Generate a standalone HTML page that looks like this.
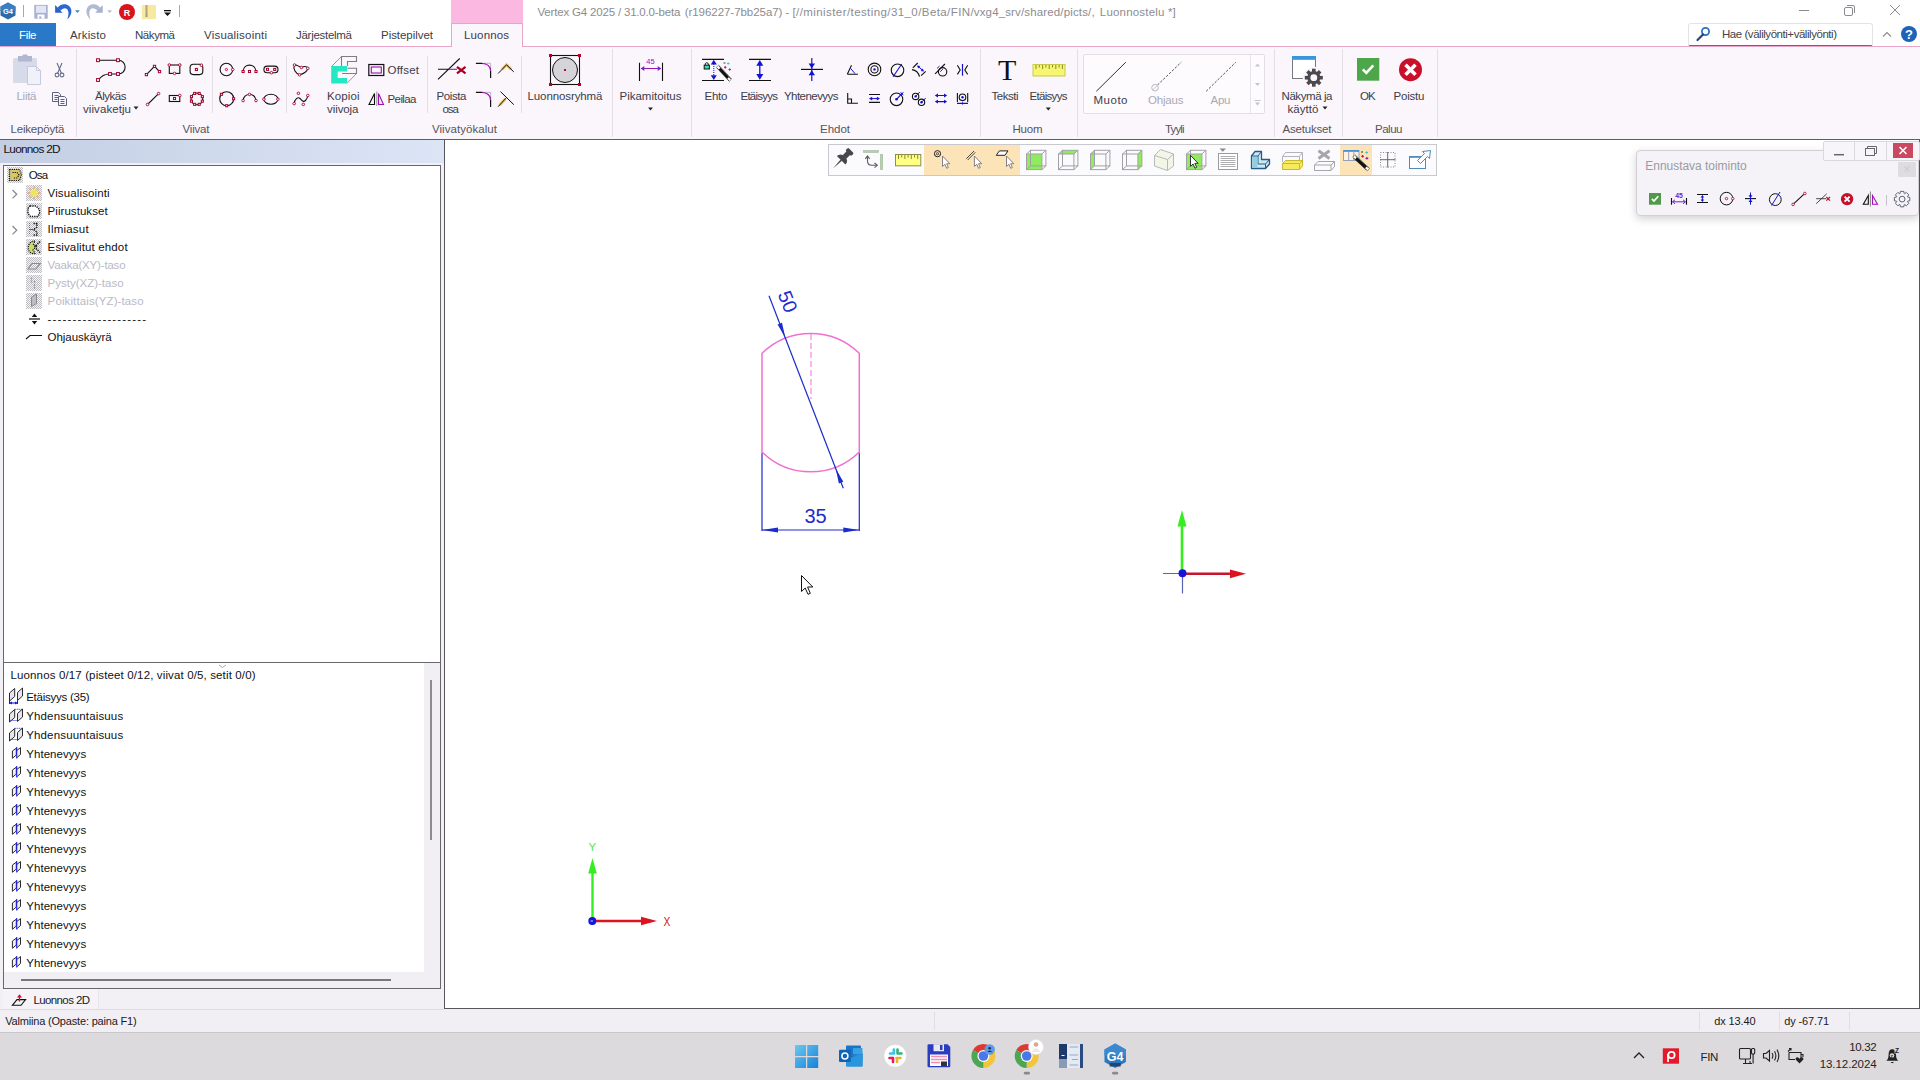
<!DOCTYPE html>
<html lang="fi">
<head>
<meta charset="utf-8">
<title>Vertex G4 2025</title>
<style>
*{box-sizing:border-box;margin:0;padding:0}
html,body{width:1920px;height:1080px;overflow:hidden;background:#fff}
body{position:relative;font-family:"Liberation Sans",sans-serif;font-size:12px;color:#222}
.abs{position:absolute}
svg{position:absolute;overflow:visible}
#title{left:0;top:0;width:1920px;height:23px;background:#fff}
#tabs{left:0;top:23px;width:1920px;height:24px;background:#fff}
#ribbon{left:0;top:47px;width:1920px;height:92px;background:#faf6fb}
#rline{left:0;top:139px;width:1920px;height:1px;background:#5e5e62}
#left{left:0;top:140px;width:444px;height:870px;background:#f2f0f4}
#canvas{left:444px;top:140px;width:1476px;height:869px;background:#fff;border-left:1px solid #55555a;border-bottom:1px solid #55555a;border-right:1px solid #55555a}
#status{left:0;top:1009px;width:1920px;height:23px;background:#f1eff3}
#taskbar{left:0;top:1032px;width:1920px;height:48px;background:#dcdadd;border-top:1px solid #c9c7ca}
.t{position:absolute;white-space:nowrap;line-height:14px}
.vs{position:absolute;width:1px;background:#e3dfe6}
</style>
</head>
<body>
<div id="title" class="abs">
<div class="abs" style="left:451px;top:0;width:72px;height:24px;background:#fbb8e0"></div>
<svg width="180" height="23" style="left:0;top:0" viewBox="0 0 180 23">
<polygon points="8,2.500 15.500,6.500 15.500,15.500 8,19.500 0.500,15.500 0.500,6.500" fill="#2d6aa8"/>
<polygon points="8,2.500 15.500,6.500 15.500,11 0.500,11 0.500,6.500" fill="#3c7fc0"/>
<text x="8" y="14.200" font-size="7.500" font-weight="bold" fill="#fff" text-anchor="middle" font-family="Liberation Sans, sans-serif">G4</text>
<rect x="23" y="5" width="1" height="12" fill="#a8a8ac"/>
<rect x="34.300" y="4.900" width="13.400" height="13.800" fill="#aab0d0"/><rect x="36" y="5.800" width="10" height="7" fill="#e3e6f5"/><rect x="37.500" y="14.500" width="7" height="4.200" fill="#fff"/><rect x="39.300" y="16.300" width="2" height="2.400" fill="#aab0d0"/>
<polygon points="55.100,4.900 55.100,12.800 62.600,12.800" fill="#2a5fcc"/><path d="M57.500 8 C60 3.300 69 2.300 71.200 9.500 C72 13.500 70 17 67.300 19.500 C68.500 15.500 69.200 12 67.200 9.300 C65.500 7.300 62.500 8 60.500 10.800 Z" fill="#2a67d4"/>
<polygon points="75,10.200 79.800,10.200 77.400,13" fill="#4f7fb4"/>
<polygon points="102.700,4.900 102.700,12.800 95.200,12.800" fill="#a9b0cd"/><path d="M100.300 8 C97.800 3.300 88.800 2.300 86.600 9.500 C85.800 13.500 87.800 17 90.500 19.500 C89.300 15.500 88.600 12 90.600 9.300 C92.300 7.300 95.300 8 97.300 10.800 Z" fill="#b2b9d2"/>
<polygon points="107.200,10.200 112,10.200 109.600,13" fill="#bcbcc4"/>
<circle cx="127" cy="12" r="8" fill="#d9141e"/>
<text x="127" y="15.500" font-size="9" font-weight="bold" fill="#fff" text-anchor="middle" font-family="Liberation Sans, sans-serif">R</text>
<rect x="142" y="5" width="14" height="14" fill="#f7e9a0"/><rect x="145.500" y="5" width="2" height="9" fill="#b6a37a"/><rect x="145.500" y="14" width="2" height="3" fill="#9a9a9a"/>
<rect x="164" y="10" width="7" height="1.300" fill="#111"/><polygon points="164,12.500 171,12.500 167.500,16" fill="#111"/>
<rect x="179" y="5" width="1" height="12" fill="#a8a8ac"/>
</svg>
<div class="t" style="left:537.5px;top:5.02px;color:#8c8c90;font-size:11.5px;letter-spacing:-0.181px;">Vertex G4 2025 / 31.0.0-beta</div>
<div class="t" style="left:684.7px;top:5.02px;color:#8c8c90;font-size:11.5px;letter-spacing:-0.044px;">(r196227-7bb25a7) -</div>
<div class="t" style="left:792.5px;top:5.02px;color:#8c8c90;font-size:11.5px;letter-spacing:0.416px;">[//minister/testing/31_0/Beta/FIN/</div>
<div class="t" style="left:973.8px;top:5.02px;color:#8c8c90;font-size:11.5px;letter-spacing:0.145px;">vxg4_srv/shared/picts/,</div>
<div class="t" style="left:1099.8px;top:5.02px;color:#8c8c90;font-size:11.5px;letter-spacing:0.189px;">Luonnostelu *]</div>
<svg width="120" height="23" style="left:1790px;top:0" viewBox="0 0 120 23" fill="none" stroke="#8a8a90" stroke-width="1">
<path d="M9 10.500 H19"/>
<rect x="54.500" y="7.500" width="8" height="8" rx="1.500"/><path d="M57 5.500 H63 Q64.500 5.500 64.500 7 V13"/>
<path d="M100 5 L110 15 M110 5 L100 15"/>
</svg>
</div>
<div id="tabs" class="abs">
<div class="abs" style="left:0;top:0;width:56px;height:23px;background:#2a79c9"></div>
<div class="abs" style="left:0;top:23px;width:1920px;height:1px;background:#eaa4c8"></div>
<div class="abs" style="left:451px;top:0;width:72px;height:24px;background:#faf6fb;border:1px solid #eaa4c8;border-bottom:none"></div>
<div class="abs" style="left:1688px;top:0;width:185px;height:23px;background:#fff;border:1px solid #e4e2e6;border-bottom:1px solid #6c6a70;border-radius:3px 3px 2px 2px"></div>
<svg width="20" height="20" style="left:1694px;top:1px" viewBox="0 0 20 20"><circle cx="11.500" cy="7.500" r="3.600" fill="#fff" stroke="#2f6fc0" stroke-width="1.800"/><path d="M9 10.500 L3.500 16" stroke="#2b3f78" stroke-width="2.200" stroke-linecap="round"/></svg>
<svg width="40" height="24" style="left:1880px;top:0" viewBox="0 0 40 24"><path d="M3 13.500 L7 9.500 L11 13.500" fill="none" stroke="#8a8a90" stroke-width="1.100"/><circle cx="29" cy="11" r="8" fill="#1d63b8"/><text x="29" y="15.500" font-size="13" font-weight="bold" fill="#fff" text-anchor="middle" font-family="Liberation Sans, sans-serif">?</text></svg>
</div>
<div class="t" style="left:19px;top:28.02px;color:#fff;font-size:11.5px;letter-spacing:-0.344px;">File</div>
<div class="t" style="left:70px;top:28.02px;color:#3c3c4a;font-size:11.5px;letter-spacing:0.141px;">Arkisto</div>
<div class="t" style="left:135px;top:28.02px;color:#3c3c4a;font-size:11.5px;letter-spacing:-0.438px;">Näkymä</div>
<div class="t" style="left:204px;top:28.02px;color:#3c3c4a;font-size:11.5px;letter-spacing:0.207px;">Visualisointi</div>
<div class="t" style="left:296px;top:28.02px;color:#3c3c4a;font-size:11.5px;letter-spacing:-0.281px;">Järjestelmä</div>
<div class="t" style="left:381px;top:28.02px;color:#3c3c4a;font-size:11.5px;letter-spacing:-0.042px;">Pistepilvet</div>
<div class="t" style="left:464px;top:28.02px;color:#3c3c4a;font-size:11.5px;letter-spacing:0.146px;">Luonnos</div>
<div class="t" style="left:1722px;top:26.52px;color:#444;font-size:11.5px;letter-spacing:-0.457px;">Hae (välilyönti+välilyönti)</div><div id="ribbon" class="abs"></div><div id="rline" class="abs"></div>
<div class="vs" style="left:76px;top:49px;height:88px"></div>
<div class="vs" style="left:612px;top:49px;height:88px"></div>
<div class="vs" style="left:691px;top:49px;height:88px"></div>
<div class="vs" style="left:980px;top:49px;height:88px"></div>
<div class="vs" style="left:1077px;top:49px;height:88px"></div>
<div class="vs" style="left:1274px;top:49px;height:88px"></div>
<div class="vs" style="left:1342px;top:49px;height:88px"></div>
<div class="vs" style="left:1437px;top:49px;height:88px"></div>
<div class="vs" style="left:212px;top:56px;height:57px"></div>
<div class="vs" style="left:286px;top:56px;height:57px"></div>
<div class="vs" style="left:427px;top:56px;height:57px"></div>
<div class="vs" style="left:521px;top:56px;height:57px"></div>
<div class="abs" style="left:1083px;top:54px;width:182px;height:60px;background:#fdfbfd;border:1px solid #e2dfe5;border-radius:2px"></div>
<div class="abs" style="left:1250px;top:55px;width:1px;height:58px;background:#e6e3e9"></div>
<div class="t" style="left:10.5px;top:122.02px;color:#55555f;font-size:11.5px;letter-spacing:-0.181px;">Leikepöytä</div>
<div class="t" style="left:182.5px;top:122.02px;color:#55555f;font-size:11.5px;letter-spacing:-0.184px;">Viivat</div>
<div class="t" style="left:432px;top:122.02px;color:#55555f;font-size:11.5px;letter-spacing:0.053px;">Viivatyökalut</div>
<div class="t" style="left:820px;top:122.02px;color:#55555f;font-size:11.5px;letter-spacing:-0.016px;">Ehdot</div>
<div class="t" style="left:1012.5px;top:122.02px;color:#55555f;font-size:11.5px;letter-spacing:-0.229px;">Huom</div>
<div class="t" style="left:1165px;top:122.02px;color:#55555f;font-size:11.5px;letter-spacing:-0.875px;">Tyyli</div>
<div class="t" style="left:1282.5px;top:122.02px;color:#55555f;font-size:11.5px;letter-spacing:-0.188px;">Asetukset</div>
<div class="t" style="left:1375px;top:122.02px;color:#55555f;font-size:11.5px;letter-spacing:-0.480px;">Paluu</div>
<div class="t" style="left:16.5px;top:89.02px;color:#a9a9b6;font-size:11.5px;letter-spacing:-0.277px;">Liitä</div>
<div class="t" style="left:95px;top:89.02px;color:#3c3c4a;font-size:11.5px;letter-spacing:-0.475px;">Älykäs</div>
<div class="t" style="left:83px;top:102.02px;color:#3c3c4a;font-size:11.5px;letter-spacing:0.076px;">viivaketju</div>
<div class="t" style="left:327px;top:89.02px;color:#3c3c4a;font-size:11.5px;letter-spacing:0.106px;">Kopioi</div>
<div class="t" style="left:327px;top:102.02px;color:#3c3c4a;font-size:11.5px;letter-spacing:-0.078px;">viivoja</div>
<div class="t" style="left:387.5px;top:62.52px;color:#3c3c4a;font-size:11.5px;letter-spacing:0.206px;">Offset</div>
<div class="t" style="left:387.5px;top:91.52px;color:#3c3c4a;font-size:11.5px;letter-spacing:-0.594px;">Peilaa</div>
<div class="t" style="left:436.5px;top:89.02px;color:#3c3c4a;font-size:11.5px;letter-spacing:-0.394px;">Poista</div>
<div class="t" style="left:442.5px;top:102.02px;color:#3c3c4a;font-size:11.5px;letter-spacing:-1.023px;">osa</div>
<div class="t" style="left:527.5px;top:89.02px;color:#3c3c4a;font-size:11.5px;letter-spacing:-0.098px;">Luonnosryhmä</div>
<div class="t" style="left:619.5px;top:89.02px;color:#3c3c4a;font-size:11.5px;letter-spacing:0.000px;">Pikamitoitus</div>
<div class="t" style="left:704.5px;top:89.02px;color:#3c3c4a;font-size:11.5px;letter-spacing:-0.224px;">Ehto</div>
<div class="t" style="left:740.5px;top:89.02px;color:#3c3c4a;font-size:11.5px;letter-spacing:-0.761px;">Etäisyys</div>
<div class="t" style="left:784px;top:89.02px;color:#3c3c4a;font-size:11.5px;letter-spacing:-0.550px;">Yhtenevyys</div>
<div class="t" style="left:991.5px;top:89.02px;color:#3c3c4a;font-size:11.5px;letter-spacing:-0.481px;">Teksti</div>
<div class="t" style="left:1029.5px;top:89.02px;color:#3c3c4a;font-size:11.5px;letter-spacing:-0.690px;">Etäisyys</div>
<div class="t" style="left:1093.5px;top:93.02px;color:#3c3c4a;font-size:11.5px;letter-spacing:0.508px;">Muoto</div>
<div class="t" style="left:1148px;top:93.02px;color:#a9a9b6;font-size:11.5px;letter-spacing:-0.188px;">Ohjaus</div>
<div class="t" style="left:1210.5px;top:93.02px;color:#a9a9b6;font-size:11.5px;letter-spacing:-0.234px;">Apu</div>
<div class="t" style="left:1281.5px;top:89.02px;color:#3c3c4a;font-size:11.5px;letter-spacing:-0.416px;">Näkymä ja</div>
<div class="t" style="left:1287.5px;top:102.02px;color:#3c3c4a;font-size:11.5px;letter-spacing:0.062px;">käyttö</div>
<div class="t" style="left:1360px;top:89.02px;color:#3c3c4a;font-size:11.5px;letter-spacing:-0.825px;">OK</div>
<div class="t" style="left:1393.5px;top:89.02px;color:#3c3c4a;font-size:11.5px;letter-spacing:-0.194px;">Poistu</div>
<div class="t" style="left:998px;top:62.91px;color:#111;font-size:30px;font-family:'Liberation Serif',serif;">T</div>
<svg width="1920" height="140" style="left:0;top:0" viewBox="0 0 1920 140" fill="none" stroke-linecap="butt">
<rect x="13" y="58" width="24" height="25" rx="1.500" fill="#d7dbe9"/><rect x="18" y="56" width="14" height="5.500" fill="#b0b7d1"/><rect x="22.500" y="54.500" width="5" height="3" rx="1" fill="#b0b7d1"/><path d="M27.500 66.500 H36.500 L40.500 70.500 V84.500 H27.500 Z" fill="#f1f2f9" stroke="#c6cadf"/><path d="M36.500 66.500 V70.500 H40.500" stroke="#c6cadf"/>
<g stroke="#666c8c" stroke-width="1.100"><path d="M57 63 L61.500 73.500 M62 63 L57.500 73.500"/><circle cx="57" cy="75" r="1.900"/><circle cx="62" cy="75" r="1.900"/></g>
<g stroke="#5a607f" stroke-width="1"><path d="M52.500 92.500 H58.500 L60.500 94.500 V101.500 H52.500 Z" fill="#faf6fb"/><path d="M54.500 95.500 H58.500 M54.500 97.500 H58.500 M54.500 99.500 H57.500"/><path d="M58.500 96.500 H64.500 L66.500 98.500 V105.500 H58.500 Z" fill="#faf6fb"/><path d="M60.500 99.500 H64.500 M60.500 101.500 H64.500 M60.500 103.500 H64.500"/></g>
<path d="M98 60.200 H118 C127.500 60.200 127.500 74 118 74 H110 C104 74 102 76 98 80" stroke="#111" stroke-width="1.100"/>
<rect x="96.56" y="58.76" width="2.88" height="2.88" fill="#fff" stroke="#a8002a" stroke-width="1"/>
<rect x="116.56" y="58.76" width="2.88" height="2.88" fill="#fff" stroke="#a8002a" stroke-width="1"/>
<rect x="108.56" y="72.56" width="2.88" height="2.88" fill="#fff" stroke="#a8002a" stroke-width="1"/>
<rect x="116.56" y="72.56" width="2.88" height="2.88" fill="#fff" stroke="#a8002a" stroke-width="1"/>
<rect x="96.56" y="78.56" width="2.88" height="2.88" fill="#fff" stroke="#a8002a" stroke-width="1"/>
<polygon points="133.500,106.500 138.500,106.500 136,109.500" fill="#222"/>
<path d="M146.400 74.600 L154.500 66.400 L159.500 71.600" stroke="#111" stroke-width="1.100"/><rect x="145.28" y="73.48" width="2.24" height="2.24" fill="#fff" stroke="#a8002a" stroke-width="1"/><rect x="153.38" y="65.28" width="2.24" height="2.24" fill="#fff" stroke="#a8002a" stroke-width="1"/><rect x="158.38" y="70.48" width="2.24" height="2.24" fill="#fff" stroke="#a8002a" stroke-width="1"/>
<rect x="169.300" y="65" width="10.500" height="8.400" stroke="#111" stroke-width="1.100"/><circle cx="169.30" cy="65.00" r="1.29" fill="#fff" stroke="#a8002a" stroke-width="0.900"/><circle cx="179.80" cy="65.00" r="1.29" fill="#fff" stroke="#a8002a" stroke-width="0.900"/><circle cx="174.50" cy="73.40" r="1.29" fill="#fff" stroke="#a8002a" stroke-width="0.900"/>
<rect x="190.100" y="64.200" width="12.700" height="10.400" rx="3.300" stroke="#111" stroke-width="1.100"/><rect x="195.36" y="68.46" width="2.08" height="2.08" fill="#fff" stroke="#a8002a" stroke-width="1"/><circle cx="201.40" cy="65.20" r="1.29" fill="#fff" stroke="#a8002a" stroke-width="0.900"/>
<circle cx="226.400" cy="69.500" r="6.300" stroke="#111" stroke-width="1.100"/><circle cx="226.40" cy="69.50" r="1.1" fill="#fff" stroke="#a8002a" stroke-width="0.900"/><circle cx="232.70" cy="69.50" r="1.29" fill="#fff" stroke="#a8002a" stroke-width="0.900"/>
<path d="M243.100 71.500 C243.500 63 255.500 63 256 71.500" stroke="#111" stroke-width="1.100"/><rect x="242.06" y="70.46" width="2.08" height="2.08" fill="#fff" stroke="#a8002a" stroke-width="1"/><rect x="248.46" y="70.46" width="2.08" height="2.08" fill="#fff" stroke="#a8002a" stroke-width="1"/><rect x="254.96" y="70.46" width="2.08" height="2.08" fill="#fff" stroke="#a8002a" stroke-width="1"/>
<rect x="263.900" y="66.100" width="14.100" height="6.600" rx="3.300" stroke="#111" stroke-width="1.100"/><rect x="266.46" y="68.36" width="2.08" height="2.08" fill="#fff" stroke="#a8002a" stroke-width="1"/><rect x="273.66" y="68.36" width="2.08" height="2.08" fill="#fff" stroke="#a8002a" stroke-width="1"/><circle cx="271.40" cy="72.70" r="1.29" fill="#fff" stroke="#a8002a" stroke-width="0.900"/>
<path d="M294.500 65 C296.500 64.300 299.500 67 301.400 67.500 C303.500 66.500 306.500 65.800 307.800 68.300 C307.500 71.500 303 74 299.600 74.800 C296 73.500 292.500 69 294.500 65 Z" stroke="#111" stroke-width="1.100"/><circle cx="294.50" cy="65.00" r="1.29" fill="#fff" stroke="#a8002a" stroke-width="0.900"/><circle cx="301.40" cy="67.50" r="1.29" fill="#fff" stroke="#a8002a" stroke-width="0.900"/><circle cx="307.80" cy="68.30" r="1.29" fill="#fff" stroke="#a8002a" stroke-width="0.900"/><circle cx="299.60" cy="74.80" r="1.29" fill="#fff" stroke="#a8002a" stroke-width="0.900"/>
<path d="M147.500 104.500 L158.600 93.600" stroke="#111" stroke-width="1.100"/><circle cx="147.50" cy="104.50" r="1.29" fill="#fff" stroke="#a8002a" stroke-width="0.900"/><circle cx="158.60" cy="93.60" r="1.29" fill="#fff" stroke="#a8002a" stroke-width="0.900"/>
<rect x="169.300" y="95.500" width="10.500" height="6" stroke="#111" stroke-width="1.100"/><rect x="173.46" y="97.46" width="2.08" height="2.08" fill="#fff" stroke="#a8002a" stroke-width="1"/><circle cx="179.80" cy="95.50" r="1.29" fill="#fff" stroke="#a8002a" stroke-width="0.900"/>
<circle cx="196.900" cy="98.900" r="5.900" stroke="#111" stroke-width="1.100"/>
<rect x="201.31" y="100.12" width="2.08" height="2.08" fill="#fff" stroke="#a8002a" stroke-width="1"/>
<rect x="198.12" y="103.31" width="2.08" height="2.08" fill="#fff" stroke="#a8002a" stroke-width="1"/>
<rect x="193.60" y="103.31" width="2.08" height="2.08" fill="#fff" stroke="#a8002a" stroke-width="1"/>
<rect x="190.41" y="100.12" width="2.08" height="2.08" fill="#fff" stroke="#a8002a" stroke-width="1"/>
<rect x="190.41" y="95.60" width="2.08" height="2.08" fill="#fff" stroke="#a8002a" stroke-width="1"/>
<rect x="193.60" y="92.41" width="2.08" height="2.08" fill="#fff" stroke="#a8002a" stroke-width="1"/>
<rect x="198.12" y="92.41" width="2.08" height="2.08" fill="#fff" stroke="#a8002a" stroke-width="1"/>
<rect x="201.31" y="95.60" width="2.08" height="2.08" fill="#fff" stroke="#a8002a" stroke-width="1"/>
<circle cx="226.700" cy="98.700" r="7" stroke="#111" stroke-width="1.100"/><rect x="220.36" y="93.26" width="2.08" height="2.08" fill="#fff" stroke="#a8002a" stroke-width="1"/><rect x="232.56" y="97.66" width="2.08" height="2.08" fill="#fff" stroke="#a8002a" stroke-width="1"/><rect x="225.66" y="104.66" width="2.08" height="2.08" fill="#fff" stroke="#a8002a" stroke-width="1"/>
<path d="M243.100 100.600 C244 92.500 255 92.500 256 100.600" stroke="#111" stroke-width="1.100"/><circle cx="243.10" cy="100.60" r="1.29" fill="#fff" stroke="#a8002a" stroke-width="0.900"/><circle cx="249.50" cy="94.40" r="1.29" fill="#fff" stroke="#a8002a" stroke-width="0.900"/><circle cx="256.00" cy="100.60" r="1.29" fill="#fff" stroke="#a8002a" stroke-width="0.900"/>
<ellipse cx="270.900" cy="99.200" rx="7" ry="5" stroke="#111" stroke-width="1.100"/><circle cx="263.90" cy="99.20" r="1.29" fill="#fff" stroke="#a8002a" stroke-width="0.900"/><circle cx="277.90" cy="99.20" r="1.29" fill="#fff" stroke="#a8002a" stroke-width="0.900"/>
<path d="M294.200 103.600 C294.500 99 298 96.500 300 98.500 C302 100.500 303.500 102.500 305.500 100.500 C307 99 307.600 97.500 307.800 95.500" stroke="#111" stroke-width="1.100"/><circle cx="298.40" cy="93.30" r="1.29" fill="#fff" stroke="#a8002a" stroke-width="0.900"/><circle cx="307.80" cy="95.50" r="1.29" fill="#fff" stroke="#a8002a" stroke-width="0.900"/><circle cx="294.20" cy="103.60" r="1.29" fill="#fff" stroke="#a8002a" stroke-width="0.900"/><circle cx="303.30" cy="104.40" r="1.29" fill="#fff" stroke="#a8002a" stroke-width="0.900"/>
<g stroke="#7d7d86" stroke-width="1.100"><path d="M341.500 66 V56.500 H356.500 V61.500 H347.500 V66"/><path d="M347.500 68.300 H356.500 V73.500 H342"/><path d="M341.500 56.500 L331.500 66.500 M356.500 73.500 L347 83.300" stroke-width="0.800"/></g>
<path d="M331.200 66.100 H347.100 V71.500 H337.700 V78.100 H347.100 V83.500 H331.200 Z" fill="#24e8c4"/>
<path d="M337.700 76 L341.500 72 L342.500 73 L338.500 77.200 Z" fill="#f4f4f8"/>
<rect x="368.800" y="64.500" width="15" height="11" stroke="#111" stroke-width="1.200"/><rect x="371.300" y="67" width="10" height="6" stroke="#a010b0" stroke-width="1.100"/>
<path d="M374.500 93.500 V104.500 H369 Z" stroke="#111" stroke-width="1.100"/><path d="M376.800 91.500 V106" stroke="#777" stroke-width="0.800"/><path d="M378.500 93.500 V104.500 H383.500 Z" stroke="#a010b0" stroke-width="1.100"/>
<path d="M438 79.300 L459.700 58.500 M438 69.300 H449" stroke="#111" stroke-width="1.100"/><path d="M449 69.300 H457" stroke="#a010b0" stroke-width="1.100"/><path d="M457 66.800 L465.500 73.300 M465.500 66.800 L457 73.300" stroke="#a80020" stroke-width="2.200"/>
<path d="M484 63.3 H490.600 V69.5" stroke="#b8b8c0" stroke-width="1"/><path d="M475.900 63.3 H482 M490.600 70.8 V77.9" stroke="#111" stroke-width="1.200"/><path d="M482 63.3 C487 63.5 490.400 66.5 490.600 70.8" stroke="#a010b0" stroke-width="1.300"/>
<path d="M484 92.4 H490.600 V98.6" stroke="#b8b8c0" stroke-width="1"/><path d="M475.900 92.4 H482 M490.600 99.9 V107.0" stroke="#111" stroke-width="1.200"/><path d="M482 92.4 C487 92.6 490.400 95.6 490.600 99.9" stroke="#a010b0" stroke-width="1.300"/>
<path d="M502 69.400 L506.500 64.800 L511.300 69.400" stroke="#f2c469" stroke-width="3"/><path d="M498.100 73.500 L506.500 64.800 L513.800 71.900" stroke="#111" stroke-width="1"/>
<path d="M499.500 105.300 L505.500 98.700" stroke="#f2c469" stroke-width="3"/><path d="M500.500 91.600 L513.800 104.700 M498.100 106.700 L506 98.100" stroke="#111" stroke-width="1"/>
<rect x="550.500" y="55.500" width="29" height="29" stroke="#111" stroke-width="1.100"/><circle cx="565" cy="70" r="12.500" fill="#d4d4d9" stroke="#111" stroke-width="1"/><rect x="564" y="69" width="2" height="2" fill="#c00828"/>
<rect x="549.0" y="54.0" width="3" height="3" fill="#b4002c"/>
<rect x="578.0" y="54.0" width="3" height="3" fill="#b4002c"/>
<rect x="549.0" y="83.0" width="3" height="3" fill="#b4002c"/>
<rect x="578.0" y="83.0" width="3" height="3" fill="#b4002c"/>
<path d="M639.500 62.700 V81 M662.500 62.700 V81" stroke="#111" stroke-width="1.100"/><path d="M641 68.500 H661" stroke="#a010b0" stroke-width="1"/><polygon points="640.800,68.500 644.300,66 644.300,71" fill="#6a2ad0"/><polygon points="661.200,68.500 657.700,66 657.700,71" fill="#6a2ad0"/>
<text x="650.500" y="64.200" font-size="7.500" fill="#a010c0" text-anchor="middle" font-family="Liberation Sans, sans-serif">45</text>
<polygon points="648,107.500 653,107.500 650.500,110.500" fill="#222"/>
<path d="M702 59.300 H724 M702 80.500 H724" stroke="#111" stroke-width="1.200"/><path d="M713.800 62 V78" stroke="#1212d2" stroke-width="1" stroke-dasharray="1 1"/><polygon points="713.800,59.800 710.800,64.500 716.800,64.500" fill="#1212d2"/><polygon points="713.800,80 710.800,75.300 716.800,75.300" fill="#1212d2"/>
<rect x="704.200" y="65.200" width="5.200" height="3.800" fill="#35e0b6" stroke="#111" stroke-width="1"/><path d="M705.300 65 V63.600 Q706.800 61.600 708.300 63.600 V65" stroke="#111" stroke-width="1"/>
<path d="M718 67 L730 80" stroke="#111" stroke-width="3.200"/><path d="M717.500 66.500 L719.500 68.700 M728 78 L730.500 80.500" stroke="#fff" stroke-width="2.200"/><path d="M716.300 67.300 L718.700 65 L731.700 79 L729.300 81.300 Z" stroke="#333" stroke-width="0.500"/>
<path d="M723.500 62 L725.500 64 M725.500 62 L723.500 64" stroke="#666" stroke-width="0.700"/><path d="M727 63.500 H729.500 M728.200 62.300 V64.700" stroke="#20c8d8" stroke-width="0.900"/><path d="M724 67.300 H726.500 M725.200 66 V68.600" stroke="#c01030" stroke-width="0.900"/><path d="M728.500 69.500 H731 M729.700 68.300 V70.700" stroke="#a010b0" stroke-width="0.900"/>
<path d="M749 59.300 H771 M749 80.500 H771" stroke="#111" stroke-width="1.200"/><path d="M759.800 63 V77" stroke="#1212d2" stroke-width="1.300"/><polygon points="759.800,60 756.300,65.800 763.300,65.800" fill="#1212d2"/><polygon points="759.800,79.800 756.300,74 763.300,74" fill="#1212d2"/>
<path d="M801 69.400 H823" stroke="#111" stroke-width="1.200"/><path d="M811.800 58 V81" stroke="#1212d2" stroke-width="1.200"/><polygon points="811.800,68.600 808.600,63.600 815,63.600" fill="#1212d2"/><polygon points="811.800,70.200 808.600,75.200 815,75.200" fill="#1212d2"/>
<path d="M847.300 74.200 H857.900 M847.300 74.200 L851.500 65.300" stroke="#111" stroke-width="1.100"/><path d="M850.600 68.400 L855 73.600" stroke="#1212d2" stroke-width="1"/>
<circle cx="874.500" cy="69.400" r="6.300" stroke="#111" stroke-width="1.100"/><circle cx="874.500" cy="69.400" r="3.600" stroke="#111" stroke-width="1.100"/><circle cx="874.500" cy="69.400" r="1.200" fill="#1212d2"/>
<circle cx="897.500" cy="70.300" r="6.300" stroke="#111" stroke-width="1.100"/><path d="M893.100 76.700 L901.700 64" stroke="#1212d2" stroke-width="1.100"/>
<path d="M912.800 67.900 L917.700 63 M912 69.600 Q918 70.500 919.500 76.700 M921.100 75.700 L925.700 71.300" stroke="#111" stroke-width="1.100"/><path d="M918 66.300 L923 70.600" stroke="#1212d2" stroke-width="1"/><polygon points="917,65.400 920.300,66 918.200,68.400" fill="#1212d2"/><polygon points="924,71.500 920.700,70.900 922.800,68.500" fill="#1212d2"/>
<circle cx="942.600" cy="71.800" r="4.200" stroke="#111" stroke-width="1.100"/><path d="M935.100 73.900 L944.900 64" stroke="#111" stroke-width="1.100"/><path d="M937.100 68.400 L939.500 66.100 M940.300 71.600 L942.800 69.200" stroke="#1212d2" stroke-width="1"/>
<path d="M957.400 65.300 L960.200 70 L957.400 74.400 M967.700 65.300 L964.800 70 L967.700 74.400" stroke="#111" stroke-width="1.100"/><path d="M962.500 64 V75.700" stroke="#1212d2" stroke-width="1.200"/>
<path d="M847.700 93.100 V103.300 H857.900 M847.700 99 H851.500 V103.300" stroke="#111" stroke-width="1.100"/>
<path d="M869 94.500 H880 M869 102.400 H880" stroke="#111" stroke-width="1.100"/><path d="M870.500 98.600 H878.500" stroke="#1212d2" stroke-width="1"/><polygon points="869,98.600 872.200,96.800 872.200,100.400" fill="#1212d2"/><polygon points="880,98.600 876.800,96.800 876.800,100.400" fill="#1212d2"/>
<circle cx="896.500" cy="99.300" r="6.300" stroke="#111" stroke-width="1.100"/><path d="M896.500 99.300 L902.500 93" stroke="#1212d2" stroke-width="1.100"/><circle cx="896.500" cy="99.300" r="1.300" fill="#1212d2"/><path d="M900.700 92.300 L901.800 93.800 L903.300 95 M901 94.600 L903.300 92.300" stroke="#1212d2" stroke-width="1"/>
<circle cx="915.600" cy="96.400" r="3.200" stroke="#111" stroke-width="1.100"/><circle cx="921.500" cy="102.300" r="3.200" stroke="#111" stroke-width="1.100"/><circle cx="915.600" cy="96.400" r="1.200" fill="#1212d2"/><circle cx="921.500" cy="102.300" r="1.200" fill="#1212d2"/><path d="M915.600 96.400 L919.800 92 M921.500 102.300 L925.700 98" stroke="#1212d2" stroke-width="1"/>
<path d="M936 95.500 H946 M936 101.600 H946" stroke="#1212d2" stroke-width="1.100"/>
<polygon points="934.800,95.5 938,93.6 938,97.4" fill="#1212d2"/><polygon points="947.200,95.5 944,93.6 944,97.4" fill="#1212d2"/>
<polygon points="934.800,101.6 938,99.69999999999999 938,103.5" fill="#1212d2"/><polygon points="947.200,101.6 944,99.69999999999999 944,103.5" fill="#1212d2"/>
<path d="M957.400 93.100 V101.900 M967.700 93.100 V101.900" stroke="#111" stroke-width="1.100"/><circle cx="962.500" cy="97.300" r="3.300" stroke="#111" stroke-width="1.100"/><circle cx="962.500" cy="97.300" r="1.200" fill="#1212d2"/><path d="M957 103.400 H968 M962.500 102.200 V104.600" stroke="#1212d2" stroke-width="1.100"/>
<rect x="1033" y="64.500" width="32" height="11.500" fill="#f6f670" stroke="#c9c94e" stroke-width="1"/>
<path d="M1036.0 65 V69" stroke="#70702a" stroke-width="0.800"/>
<path d="M1039.3 65 V67.5" stroke="#70702a" stroke-width="0.800"/>
<path d="M1042.6 65 V69" stroke="#70702a" stroke-width="0.800"/>
<path d="M1045.9 65 V67.5" stroke="#70702a" stroke-width="0.800"/>
<path d="M1049.2 65 V69" stroke="#70702a" stroke-width="0.800"/>
<path d="M1052.5 65 V67.5" stroke="#70702a" stroke-width="0.800"/>
<path d="M1055.8 65 V69" stroke="#70702a" stroke-width="0.800"/>
<path d="M1059.1 65 V67.5" stroke="#70702a" stroke-width="0.800"/>
<path d="M1062.4 65 V69" stroke="#70702a" stroke-width="0.800"/>
<polygon points="1045.800,107.500 1050.800,107.500 1048.300,110.500" fill="#222"/>
<path d="M1096.300 91.300 L1125.800 62.200" stroke="#333" stroke-width="1"/>
<path d="M1157.500 85 L1181.300 62.200" stroke="#555" stroke-width="1" stroke-dasharray="2.500 1.500"/><circle cx="1155" cy="87.700" r="3.300" stroke="#b8b8c0" stroke-width="1"/><path d="M1153 89.700 L1157 85.700" stroke="#b8b8c0" stroke-width="0.800"/>
<path d="M1206.200 91.300 L1235.800 62.200" stroke="#555" stroke-width="1" stroke-dasharray="2.500 1.500"/>
<polygon points="1255,66.500 1260,66.500 1257.500,63.500" fill="#c4c4cc"/><polygon points="1255,83 1260,83 1257.500,86" fill="#c4c4cc"/><path d="M1254.500 100.500 H1260.500" stroke="#c4c4cc"/><polygon points="1255,102.500 1260,102.500 1257.500,105.500" fill="#c4c4cc"/>
<rect x="1292.500" y="56.500" width="23" height="22" fill="#fff" stroke="#77777c" stroke-width="1"/><rect x="1292" y="56" width="24" height="3.800" fill="#3a96dc"/>
<circle cx="1313.800" cy="77.700" r="11" fill="#faf6fb"/>
<rect x="1312" y="68.700" width="3.600" height="5" fill="#4a4a4e" transform="rotate(0 1313.800 77.700)"/><rect x="1312" y="68.700" width="3.600" height="5" fill="#4a4a4e" transform="rotate(45 1313.800 77.700)"/><rect x="1312" y="68.700" width="3.600" height="5" fill="#4a4a4e" transform="rotate(90 1313.800 77.700)"/><rect x="1312" y="68.700" width="3.600" height="5" fill="#4a4a4e" transform="rotate(135 1313.800 77.700)"/><rect x="1312" y="68.700" width="3.600" height="5" fill="#4a4a4e" transform="rotate(180 1313.800 77.700)"/><rect x="1312" y="68.700" width="3.600" height="5" fill="#4a4a4e" transform="rotate(225 1313.800 77.700)"/><rect x="1312" y="68.700" width="3.600" height="5" fill="#4a4a4e" transform="rotate(270 1313.800 77.700)"/><rect x="1312" y="68.700" width="3.600" height="5" fill="#4a4a4e" transform="rotate(315 1313.800 77.700)"/><circle cx="1313.800" cy="77.700" r="5" stroke="#4a4a4e" stroke-width="3.200" fill="#faf6fb"/>
<polygon points="1322.500,106.500 1327.500,106.500 1325,109.500" fill="#222"/>
<rect x="1357" y="58" width="22.300" height="22.700" fill="#4ea64a"/><path d="M1362.800 69.300 L1366.300 72.800 L1373.300 65.300" stroke="#fff" stroke-width="2.600"/>
<circle cx="1410.500" cy="69.700" r="11.500" fill="#c9102a"/><path d="M1405.500 64.700 L1415.500 74.700 M1415.500 64.700 L1405.500 74.700" stroke="#fff" stroke-width="3.600"/>
</svg><div id="left" class="abs">
<div class="abs" style="left:0;top:0;width:444px;height:23px;background:linear-gradient(90deg,#c4cee3 0,#cfd9ec 45%,#dce5f6 100%)"></div>
<div class="abs" style="left:3px;top:25px;width:438px;height:824px;background:#fff;border:1px solid #67676c"></div>
<div class="abs" style="left:4px;top:522px;width:436px;height:1px;background:#67676c"></div>
<div class="abs" style="left:424px;top:523px;width:16px;height:325px;background:#f1eff3"></div>
<div class="abs" style="left:4px;top:832px;width:436px;height:16px;background:#f1eff3"></div>
<div class="abs" style="left:430px;top:540px;width:2px;height:160px;background:#8c8c90"></div>
<div class="abs" style="left:21px;top:839px;width:370px;height:2px;background:#77777b"></div>
<div class="abs" style="left:3px;top:849px;width:96px;height:20px;background:#f5f3f7;border-right:1px solid #e9e7ec"></div>
</div>
<div class="t" style="left:3.5px;top:141.71px;color:#10101c;font-size:11.8px;letter-spacing:-0.736px;">Luonnos 2D</div>
<div class="t" style="left:28.7px;top:167.72px;color:#101014;font-size:11.5px;letter-spacing:-0.797px;">Osa</div>
<div class="t" style="left:47.6px;top:185.72px;color:#101014;font-size:11.5px;letter-spacing:0.124px;">Visualisointi</div>
<div class="t" style="left:47.6px;top:203.72px;color:#101014;font-size:11.5px;letter-spacing:0.051px;">Piirustukset</div>
<div class="t" style="left:47.6px;top:221.72px;color:#101014;font-size:11.5px;letter-spacing:0.196px;">Ilmiasut</div>
<div class="t" style="left:47.6px;top:239.72px;color:#101014;font-size:11.5px;letter-spacing:0.133px;">Esivalitut ehdot</div>
<div class="t" style="left:47.6px;top:257.72px;color:#b9b9c6;font-size:11.5px;letter-spacing:-0.179px;">Vaaka(XY)-taso</div>
<div class="t" style="left:47.6px;top:275.72px;color:#b9b9c6;font-size:11.5px;letter-spacing:-0.004px;">Pysty(XZ)-taso</div>
<div class="t" style="left:47.6px;top:293.72px;color:#b9b9c6;font-size:11.5px;letter-spacing:0.115px;">Poikittais(YZ)-taso</div>
<div class="t" style="left:47.6px;top:311.72px;color:#101014;font-size:11.5px;letter-spacing:1.153px;">--------------------</div>
<div class="t" style="left:47.6px;top:329.72px;color:#101014;font-size:11.5px;letter-spacing:-0.056px;">Ohjauskäyrä</div>
<div class="t" style="left:10.5px;top:668.32px;color:#101014;font-size:11.5px;letter-spacing:0.134px;">Luonnos 0/17 (pisteet 0/12, viivat 0/5, setit 0/0)</div>
<div class="t" style="left:26.2px;top:690.02px;color:#101014;font-size:11.5px;letter-spacing:-0.247px;">Etäisyys (35)</div>
<div class="t" style="left:26.2px;top:709.02px;color:#101014;font-size:11.5px;letter-spacing:0.157px;">Yhdensuuntaisuus</div>
<div class="t" style="left:26.2px;top:728.02px;color:#101014;font-size:11.5px;letter-spacing:0.157px;">Yhdensuuntaisuus</div>
<div class="t" style="left:26.2px;top:747.02px;color:#101014;font-size:11.5px;letter-spacing:0.061px;">Yhtenevyys</div>
<div class="t" style="left:26.2px;top:766.02px;color:#101014;font-size:11.5px;letter-spacing:0.061px;">Yhtenevyys</div>
<div class="t" style="left:26.2px;top:785.02px;color:#101014;font-size:11.5px;letter-spacing:0.061px;">Yhtenevyys</div>
<div class="t" style="left:26.2px;top:804.02px;color:#101014;font-size:11.5px;letter-spacing:0.061px;">Yhtenevyys</div>
<div class="t" style="left:26.2px;top:823.02px;color:#101014;font-size:11.5px;letter-spacing:0.061px;">Yhtenevyys</div>
<div class="t" style="left:26.2px;top:842.02px;color:#101014;font-size:11.5px;letter-spacing:0.061px;">Yhtenevyys</div>
<div class="t" style="left:26.2px;top:861.02px;color:#101014;font-size:11.5px;letter-spacing:0.061px;">Yhtenevyys</div>
<div class="t" style="left:26.2px;top:880.02px;color:#101014;font-size:11.5px;letter-spacing:0.061px;">Yhtenevyys</div>
<div class="t" style="left:26.2px;top:899.02px;color:#101014;font-size:11.5px;letter-spacing:0.061px;">Yhtenevyys</div>
<div class="t" style="left:26.2px;top:918.02px;color:#101014;font-size:11.5px;letter-spacing:0.061px;">Yhtenevyys</div>
<div class="t" style="left:26.2px;top:937.02px;color:#101014;font-size:11.5px;letter-spacing:0.061px;">Yhtenevyys</div>
<div class="t" style="left:26.2px;top:956.02px;color:#101014;font-size:11.5px;letter-spacing:0.061px;">Yhtenevyys</div>
<div class="t" style="left:33.4px;top:992.52px;color:#1a1a22;font-size:11.5px;letter-spacing:-0.603px;">Luonnos 2D</div>
<svg width="444" height="1080" style="left:0;top:0" viewBox="0 0 444 1080" fill="none">
<defs><pattern id="dth" width="2" height="2" patternUnits="userSpaceOnUse"><rect width="2" height="2" fill="#f4f4f6"/><rect width="1" height="1" fill="#bdbdc2"/><rect x="1" y="1" width="1" height="1" fill="#bdbdc2"/></pattern></defs>
<rect x="7" y="167" width="16" height="16" fill="url(#dth)"/><path d="M9.500 169.500 H19.500 L21.500 174.500 L19.500 180.500 H9.500 Z" fill="#d8c86a" stroke="#111" stroke-width="1.200" stroke-dasharray="1.200 1"/><path d="M12.500 172.500 H17 L19 175 L17 178 H13" stroke="#111" stroke-width="1.200" stroke-dasharray="1.200 1"/>
<rect x="26" y="185" width="16" height="16" fill="url(#dth)"/><circle cx="34" cy="193" r="3.600" fill="#eee65a"/><g stroke="#e8b088" stroke-width="1.800"><path d="M34 186.500 V189 M34 197 V199.500 M27.500 193 H30 M38 193 H40.500 M29.500 188.500 L31.200 190.200 M36.800 195.800 L38.500 197.500 M38.500 188.500 L36.800 190.200 M31.200 195.800 L29.500 197.500"/></g>
<rect x="26" y="203" width="16" height="16" fill="url(#dth)"/><path d="M30 206 H36 L39.500 209.500 V214 L37.500 216.500 H30.500 L28 213.500 V208.500 Z" fill="#fff" stroke="#111" stroke-width="1.400" stroke-dasharray="1.300 1"/>
<rect x="26" y="221" width="16" height="16" fill="url(#dth)"/><path d="M29.500 223 V235" stroke="#777" stroke-width="1" stroke-dasharray="1 1"/><path d="M33.500 223.500 H37 V227 L33.500 229.500 L37 232 V235 H33.500" stroke="#111" stroke-width="1.300" stroke-dasharray="1.300 1"/><path d="M29.500 229.500 H33" stroke="#555" stroke-width="1"/>
<rect x="26" y="239" width="16" height="16" fill="url(#dth)"/><path d="M35 241 C29 241 27 247 29 251 C30 253 33 254 35 253.500 L33 250 L36.500 246.500 L33.500 244.500 Z" fill="#c8dc6a" stroke="#111" stroke-width="1.200" stroke-dasharray="1.200 1"/><path d="M40 241.500 L34.500 247 M36 248.500 L40 252.500" stroke="#111" stroke-width="1.600" stroke-dasharray="1.300 1"/>
<rect x="26" y="257" width="16" height="16" fill="url(#dth)"/><path d="M28 269 L32 263.500 H40 L36 269 Z" stroke="#8a8a90" stroke-width="1.200"/>
<rect x="26" y="275" width="16" height="16" fill="url(#dth)"/><path d="M31.500 277.500 V283 M34.500 281 V289" stroke="#9a9aa0" stroke-width="1.200" stroke-dasharray="2 1"/>
<rect x="26" y="293" width="16" height="16" fill="url(#dth)"/><path d="M31.500 297 L36.500 294 V303.500 L31.500 306.500 Z" fill="#bdbdc4" stroke="#8a8a90" stroke-width="1"/>
<path d="M12.500 190.0 L16.700 194.2 L12.500 198.39999999999998" stroke="#8a8a90" stroke-width="1.300"/>
<path d="M12.500 226.0 L16.700 230.2 L12.500 234.39999999999998" stroke="#8a8a90" stroke-width="1.300"/>
<path d="M29 319 H40" stroke="#111" stroke-width="1.200"/><polygon points="34.500,313.500 31.800,317 37.200,317" fill="#111"/><polygon points="34.500,324.500 31.800,321 37.200,321" fill="#111"/>
<path d="M26 339 L30 335.500 H42" stroke="#111" stroke-width="1.100"/>
<path d="M219 665 L222.500 667.500 L226 665" stroke="#9a9aa0" stroke-width="0.900"/>
<path d="M9.500 693 L14.700 688.5 V696.5 L9.500 701 Z" fill="#e6e6ec" stroke="#2a2a2e" stroke-width="1"/><path d="M17.500 692.5 L22.500 688 V696 L17.500 700.5 Z" fill="#e6e6ec" stroke="#2a2a2e" stroke-width="1"/><path d="M9.500 701 V704 M17.500 700.5 V704" stroke="#2a2a2e" stroke-width="1"/><path d="M9.500 703 H17.500" stroke="#1414e6" stroke-width="1.100"/><polygon points="9.500,703 12,701.500 12,704.500" fill="#1414e6"/><polygon points="17.500,703 15,701.500 15,704.500" fill="#1414e6"/>
<path d="M9.500 714 L14.700 709.5 V717.5 L9.500 722 Z" fill="#e6e6ec" stroke="#2a2a2e" stroke-width="1"/><path d="M17.500 713.5 L22.500 709 V717 L17.500 721.5 Z" fill="#e6e6ec" stroke="#2a2a2e" stroke-width="1"/><path d="M14.700 709.3 H22.500 M9.500 720.5 H17.500" stroke="#2020d0" stroke-width="1" stroke-dasharray="1 1"/>
<path d="M9.500 733 L14.700 728.5 V736.5 L9.500 741 Z" fill="#e6e6ec" stroke="#2a2a2e" stroke-width="1"/><path d="M17.500 732.5 L22.500 728 V736 L17.500 740.5 Z" fill="#e6e6ec" stroke="#2a2a2e" stroke-width="1"/><path d="M14.700 728.3 H22.500 M9.500 739.5 H17.500" stroke="#2020d0" stroke-width="1" stroke-dasharray="1 1"/>
<path d="M12.400 751 L16.300 748.2 V755 L12.400 758.3 Z" fill="#f0f0f4" stroke="#2a2a2e" stroke-width="1"/><path d="M17 750.3 L20.500 747.6 V754.5 L17 757.6" fill="#f0f0f4" stroke="#2a2a2e" stroke-width="1"/><path d="M16.700 747 V758.6" stroke="#1a1ae0" stroke-width="1.100"/>
<path d="M12.400 770 L16.300 767.2 V774 L12.400 777.3 Z" fill="#f0f0f4" stroke="#2a2a2e" stroke-width="1"/><path d="M17 769.3 L20.500 766.6 V773.5 L17 776.6" fill="#f0f0f4" stroke="#2a2a2e" stroke-width="1"/><path d="M16.700 766 V777.6" stroke="#1a1ae0" stroke-width="1.100"/>
<path d="M12.400 789 L16.300 786.2 V793 L12.400 796.3 Z" fill="#f0f0f4" stroke="#2a2a2e" stroke-width="1"/><path d="M17 788.3 L20.500 785.6 V792.5 L17 795.6" fill="#f0f0f4" stroke="#2a2a2e" stroke-width="1"/><path d="M16.700 785 V796.6" stroke="#1a1ae0" stroke-width="1.100"/>
<path d="M12.400 808 L16.300 805.2 V812 L12.400 815.3 Z" fill="#f0f0f4" stroke="#2a2a2e" stroke-width="1"/><path d="M17 807.3 L20.500 804.6 V811.5 L17 814.6" fill="#f0f0f4" stroke="#2a2a2e" stroke-width="1"/><path d="M16.700 804 V815.6" stroke="#1a1ae0" stroke-width="1.100"/>
<path d="M12.400 827 L16.300 824.2 V831 L12.400 834.3 Z" fill="#f0f0f4" stroke="#2a2a2e" stroke-width="1"/><path d="M17 826.3 L20.500 823.6 V830.5 L17 833.6" fill="#f0f0f4" stroke="#2a2a2e" stroke-width="1"/><path d="M16.700 823 V834.6" stroke="#1a1ae0" stroke-width="1.100"/>
<path d="M12.400 846 L16.300 843.2 V850 L12.400 853.3 Z" fill="#f0f0f4" stroke="#2a2a2e" stroke-width="1"/><path d="M17 845.3 L20.500 842.6 V849.5 L17 852.6" fill="#f0f0f4" stroke="#2a2a2e" stroke-width="1"/><path d="M16.700 842 V853.6" stroke="#1a1ae0" stroke-width="1.100"/>
<path d="M12.400 865 L16.300 862.2 V869 L12.400 872.3 Z" fill="#f0f0f4" stroke="#2a2a2e" stroke-width="1"/><path d="M17 864.3 L20.500 861.6 V868.5 L17 871.6" fill="#f0f0f4" stroke="#2a2a2e" stroke-width="1"/><path d="M16.700 861 V872.6" stroke="#1a1ae0" stroke-width="1.100"/>
<path d="M12.400 884 L16.300 881.2 V888 L12.400 891.3 Z" fill="#f0f0f4" stroke="#2a2a2e" stroke-width="1"/><path d="M17 883.3 L20.500 880.6 V887.5 L17 890.6" fill="#f0f0f4" stroke="#2a2a2e" stroke-width="1"/><path d="M16.700 880 V891.6" stroke="#1a1ae0" stroke-width="1.100"/>
<path d="M12.400 903 L16.300 900.2 V907 L12.400 910.3 Z" fill="#f0f0f4" stroke="#2a2a2e" stroke-width="1"/><path d="M17 902.3 L20.500 899.6 V906.5 L17 909.6" fill="#f0f0f4" stroke="#2a2a2e" stroke-width="1"/><path d="M16.700 899 V910.6" stroke="#1a1ae0" stroke-width="1.100"/>
<path d="M12.400 922 L16.300 919.2 V926 L12.400 929.3 Z" fill="#f0f0f4" stroke="#2a2a2e" stroke-width="1"/><path d="M17 921.3 L20.500 918.6 V925.5 L17 928.6" fill="#f0f0f4" stroke="#2a2a2e" stroke-width="1"/><path d="M16.700 918 V929.6" stroke="#1a1ae0" stroke-width="1.100"/>
<path d="M12.400 941 L16.300 938.2 V945 L12.400 948.3 Z" fill="#f0f0f4" stroke="#2a2a2e" stroke-width="1"/><path d="M17 940.3 L20.500 937.6 V944.5 L17 947.6" fill="#f0f0f4" stroke="#2a2a2e" stroke-width="1"/><path d="M16.700 937 V948.6" stroke="#1a1ae0" stroke-width="1.100"/>
<path d="M12.400 960 L16.300 957.2 V964 L12.400 967.3 Z" fill="#f0f0f4" stroke="#2a2a2e" stroke-width="1"/><path d="M17 959.3 L20.500 956.6 V963.5 L17 966.6" fill="#f0f0f4" stroke="#2a2a2e" stroke-width="1"/><path d="M16.700 956 V967.6" stroke="#1a1ae0" stroke-width="1.100"/>
<path d="M12.300 1005.300 L17 999.600 H25.600 L21 1005.300 Z" stroke="#111" stroke-width="1.100"/><path d="M19.500 1001.600 V996.500" stroke="#d0102a" stroke-width="1.300"/><polygon points="19.500,994.200 17,997.600 22,997.600" fill="#d0102a"/>
</svg><div id="canvas" class="abs"></div>
<div class="abs" style="left:828px;top:144px;width:609px;height:32px;background:#fbfafc;border:1px solid #c9c8cd"></div>
<div class="abs" style="left:924px;top:145px;width:96px;height:30px;background:#fde3b8"></div>
<div class="abs" style="left:1340px;top:145px;width:32px;height:30px;background:#fde3b8"></div>
<div class="abs" style="left:1636px;top:150px;width:283px;height:66px;background:#f5f3f7;border:1px solid #d2d0d6;border-radius:4px;box-shadow:0 3px 8px rgba(0,0,0,.18)"></div>
<div class="abs" style="left:1898px;top:162px;width:18px;height:15px;background:#dedce1;border-radius:1px"></div>
<div class="abs" style="left:1823px;top:141px;width:97px;height:20px;background:#f7f5f9;border:1px solid #dad8de;border-radius:2px"></div>
<div class="abs" style="left:1854px;top:142px;width:1px;height:18px;background:#dad8de"></div><div class="abs" style="left:1886px;top:142px;width:1px;height:18px;background:#dad8de"></div>
<div class="abs" style="left:1893px;top:143px;width:20px;height:15px;background:#c94960"></div>
<div class="t" style="left:1645.3px;top:158.54px;color:#9a9aa2;font-size:12px;letter-spacing:-0.033px;">Ennustava toiminto</div>
<svg width="1920" height="1080" style="left:0;top:0" viewBox="0 0 1920 1080" fill="none">
<g transform="translate(842 159.500) rotate(45)" fill="#47474b"><rect x="-4" y="-12.800" width="8" height="4" rx="1.200"/><rect x="-2.600" y="-9.500" width="5.200" height="6"/><path d="M-6 1.200 Q-6 -4 0 -4 Q6 -4 6 1.200 Z"/><path d="M-0.900 1 H0.900 L0 12.800 Z"/></g>
<rect x="863.500" y="150.500" width="15" height="2" fill="#9be878" stroke="#b0b0b4" stroke-width="0.600"/><rect x="880.300" y="154.500" width="2.400" height="15" fill="#9be878" stroke="#b0b0b4" stroke-width="0.600"/>
<path d="M867.500 156.500 V161 Q867.500 165.300 872 165.300 H876.500" stroke="#5a5a60" stroke-width="1.100"/><path d="M865.300 158.800 L867.500 156 L869.700 158.800 M874.500 163 L877.300 165.300 L874.500 167.600" stroke="#5a5a60" stroke-width="1.100"/>
<rect x="895.500" y="154.500" width="25.300" height="11.300" fill="#ffff84" stroke="#8e8e48" stroke-width="1"/>
<path d="M898.5 155 V159" stroke="#6a6a30" stroke-width="0.800"/>
<path d="M901.7 155 V157.5" stroke="#6a6a30" stroke-width="0.800"/>
<path d="M904.9 155 V159" stroke="#6a6a30" stroke-width="0.800"/>
<path d="M908.1 155 V157.5" stroke="#6a6a30" stroke-width="0.800"/>
<path d="M911.3 155 V159" stroke="#6a6a30" stroke-width="0.800"/>
<path d="M914.5 155 V157.5" stroke="#6a6a30" stroke-width="0.800"/>
<path d="M917.7 155 V159" stroke="#6a6a30" stroke-width="0.800"/>
<circle cx="937.500" cy="153.700" r="3.100" stroke="#222" stroke-width="1"/><circle cx="937.500" cy="153.700" r="1.100" stroke="#222" stroke-width="0.800"/><path d="M942.50 156.00 L942.50 166.50 L944.90 164.30 L946.70 168.30 L948.40 167.50 L946.60 163.70 L949.80 163.70 Z" fill="#fff" stroke="#77777c" stroke-width="0.900" stroke-linejoin="miter"/>
<path d="M966.300 158.700 L974 151 M967.700 160 L975.300 152.300" stroke="#333" stroke-width="0.900"/><path d="M974.40 156.00 L974.40 166.50 L976.80 164.30 L978.60 168.30 L980.30 167.50 L978.50 163.70 L981.70 163.70 Z" fill="#fff" stroke="#77777c" stroke-width="0.900" stroke-linejoin="miter"/>
<path d="M996.300 155.300 L999.400 150.900 H1008 L1005 155.300 Z" stroke="#222" stroke-width="1" fill="#fff"/><path d="M1006.50 156.00 L1006.50 166.50 L1008.90 164.30 L1010.70 168.30 L1012.40 167.50 L1010.60 163.70 L1013.80 163.70 Z" fill="#fff" stroke="#77777c" stroke-width="0.900" stroke-linejoin="miter"/>
<rect x="1026.5" y="154" width="15.400" height="15.600" fill="#8fec5e"/><g stroke="#a2a2a6" stroke-width="1" fill="none"><rect x="1026.5" y="154" width="15.400" height="15.600"/><rect x="1030.5" y="150.3" width="15.400" height="15.600"/><path d="M1026.5 154 L1030.5 150.3 M1041.9 154 L1045.9 150.3 M1026.5 169.6 L1030.5 165.9 M1041.9 169.6 L1045.9 165.9"/></g>
<polygon points="1058.5,154 1062.5,150.3 1077.9,150.3 1073.9,154" fill="#8fec5e"/><g stroke="#a2a2a6" stroke-width="1" fill="none"><rect x="1058.5" y="154" width="15.400" height="15.600"/><rect x="1062.5" y="150.3" width="15.400" height="15.600"/><path d="M1058.5 154 L1062.5 150.3 M1073.9 154 L1077.9 150.3 M1058.5 169.6 L1062.5 165.9 M1073.9 169.6 L1077.9 165.9"/></g>
<polygon points="1090.5,154 1094.5,150.3 1094.5,165.9 1090.5,169.6" fill="#8fec5e"/><g stroke="#a2a2a6" stroke-width="1" fill="none"><rect x="1090.5" y="154" width="15.400" height="15.600"/><rect x="1094.5" y="150.3" width="15.400" height="15.600"/><path d="M1090.5 154 L1094.5 150.3 M1105.9 154 L1109.9 150.3 M1090.5 169.6 L1094.5 165.9 M1105.9 169.6 L1109.9 165.9"/></g>
<polygon points="1137.9,154 1141.9,150.3 1141.9,165.9 1137.9,169.6" fill="#8fec5e"/><g stroke="#a2a2a6" stroke-width="1" fill="none"><rect x="1122.5" y="154" width="15.400" height="15.600"/><rect x="1126.5" y="150.3" width="15.400" height="15.600"/><path d="M1122.5 154 L1126.5 150.3 M1137.9 154 L1141.9 150.3 M1122.5 169.6 L1126.5 165.9 M1137.9 169.6 L1141.9 165.9"/></g>
<polygon points="1154.500,155.500 1160.500,149.500 1173.500,154 1173.500,166 1167.500,170.500 1154.500,166" fill="#f2f6e6" stroke="#b8b8bc" stroke-width="1"/><path d="M1154.500 155.500 L1167.500 159.500 L1173.500 154 M1167.500 159.500 V170.500" stroke="#b8b8bc" stroke-width="1"/>
<rect x="1186.5" y="154" width="15.400" height="15.600" fill="#8fec5e"/><g stroke="#a2a2a6" stroke-width="1" fill="none"><rect x="1186.5" y="154" width="15.400" height="15.600"/><rect x="1190.5" y="150.3" width="15.400" height="15.600"/><path d="M1186.5 154 L1190.5 150.3 M1201.9 154 L1205.9 150.3 M1186.5 169.6 L1190.5 165.9 M1201.9 169.6 L1205.9 165.9"/></g><path d="M1190.50 155.30 L1190.50 166.33 L1193.02 164.02 L1194.91 168.22 L1196.69 167.38 L1194.81 163.39 L1198.16 163.39 Z" fill="#fff" stroke="#222" stroke-width="0.900" stroke-linejoin="miter"/>
<rect x="1218.500" y="153.500" width="19" height="16" fill="#fff" stroke="#9a9a9e" stroke-width="1"/><path d="M1220.500 156.500 H1235.500 M1220.500 158.500 H1235.500 M1220.500 160.500 H1235.500 M1220.500 162.500 H1235.500 M1220.500 164.500 H1235.500 M1220.500 166.500 H1235.500" stroke="#9a9a9e" stroke-width="0.800"/><polygon points="1219.500,148.500 1226,148.500 1222.800,151.800" fill="#8a8a8e"/>
<path d="M1251.500 156 L1255 151.500 H1261.500 V159.500 H1269.500 V164 L1265.500 168.500 H1251.500 Z" fill="#cfe9f4" stroke="#2a5a86" stroke-width="1.300" stroke-linejoin="round"/><path d="M1251.500 156 H1258 V164 H1265.500 V168.500 M1258 156 L1261.500 151.500 M1265.500 164 L1269.500 159.500" stroke="#2a5a86" stroke-width="1"/><rect x="1252.500" y="157" width="5" height="11" fill="#8fd0e0"/>
<g stroke="#b4b4b8" stroke-width="1"><path d="M1282.500 156.500 L1285.500 152.500 H1302.500 V164 M1282.500 156.500 H1299.500 L1302.500 152.500 M1282.500 156.500 V162 M1299.500 156.500 V162"/></g><path d="M1282.500 163.500 L1285.500 160.500 H1302.500 V166 L1299.500 169.500 H1282.500 Z" fill="#f6ea5e" stroke="#c9b92e" stroke-width="1"/><path d="M1282.500 163.500 H1299.500 V169.500 M1299.500 163.500 L1302.500 160.500" stroke="#c9b92e" stroke-width="1"/>
<path d="M1318.500 150.800 L1329.500 158.500 M1329.500 150.800 L1318.500 158.500" stroke="#a6a6aa" stroke-width="3"/><path d="M1314.500 165 L1318 161.500 H1334.500 V166.500 L1331 170.500 H1314.500 Z M1314.500 165 H1331 V170.500 M1331 165 L1334.500 161.500" stroke="#a6a6aa" stroke-width="1" fill="#fbfafc"/>
<rect x="1343.500" y="150.500" width="15.500" height="10" fill="#fdf3e0" stroke="#8a9ab8" stroke-width="0.900"/><rect x="1343.500" y="150.200" width="15.500" height="1.600" fill="#3a8ad8"/><path d="M1348.700 151 V160.500 M1353.800 151 V160.500" stroke="#8a9ab8" stroke-width="0.900"/>
<path d="M1354.500 157 L1367.500 169" stroke="#111" stroke-width="3.200"/><path d="M1353.800 156.300 L1356 158.400 M1365.800 167.400 L1368.300 169.700" stroke="#fff" stroke-width="2.400"/><path d="M1352.600 157.200 L1354.900 154.700 L1369.600 168.300 L1367.300 170.800 Z" stroke="#333" stroke-width="0.500"/>
<path d="M1361 151 L1363 153 M1363 151 L1361 153" stroke="#666" stroke-width="0.700"/><path d="M1365.300 152.500 H1368 M1366.700 151.200 V153.800" stroke="#20c8d8" stroke-width="0.900"/><path d="M1361.200 156.300 H1364 M1362.600 155 V157.600" stroke="#c01030" stroke-width="1"/><path d="M1365.500 158.300 H1368.300 M1366.900 157 V159.600" stroke="#8010b0" stroke-width="1"/>
<rect x="1380.500" y="152.500" width="14.500" height="14.500" stroke="#8a8a8e" stroke-width="1" stroke-dasharray="1 1.500"/><path d="M1387.700 152 V167.500 M1380 159.700 H1395.500" stroke="#5a5a5e" stroke-width="0.900"/>
<rect x="1409.500" y="156.500" width="16" height="12" fill="#fff" stroke="#4f8cba" stroke-width="1"/><rect x="1409.500" y="156" width="16" height="1.800" fill="#4f8cba"/><path d="M1417.500 160.500 L1424.500 153.500 L1422.500 151.500 L1430.500 150.500 L1429.500 158.500 L1427.500 156.500 L1420.500 163.500 Z" fill="#fbfafc" stroke="#4f8cba" stroke-width="1"/>
<path d="M1834 154.700 H1844" stroke="#66666c" stroke-width="1.500"/><rect x="1865.500" y="148.500" width="9" height="7" stroke="#66666c" stroke-width="1"/><path d="M1867.500 148.500 V146.500 H1876.500 V153.500 H1874.500" stroke="#66666c" stroke-width="1"/><path d="M1899.500 147 L1906.500 154 M1906.500 147 L1899.500 154" stroke="#fff" stroke-width="1.600"/>
<path d="M1904.500 166.500 L1909.500 171.500 M1909.500 166.500 L1904.500 171.500" stroke="#cfcdd3" stroke-width="1.200"/>
<rect x="1649" y="193" width="12" height="11.700" fill="#4e9a4a"/><path d="M1651.800 198.800 L1654 201 L1658.300 196.200" stroke="#fff" stroke-width="1.700"/>
<path d="M1671.500 198 V204.700 M1686.500 198 V204.700" stroke="#111" stroke-width="1.100"/><path d="M1672.500 201.800 H1685.500" stroke="#7420cc" stroke-width="1"/><path d="M1675 199.800 L1672.500 201.800 L1675 203.800 M1683 199.800 L1685.500 201.800 L1683 203.800" stroke="#7420cc" stroke-width="1"/><text x="1679" y="197.800" font-size="6.800" font-weight="bold" fill="#7420cc" text-anchor="middle" font-family="Liberation Sans, sans-serif">45</text>
<path d="M1697 194.500 H1708 M1697 202.500 H1708" stroke="#111" stroke-width="1.200"/><path d="M1702.400 196 V201" stroke="#1212d2" stroke-width="1"/><polygon points="1702.400,195 1700.600,197.500 1704.200,197.500" fill="#1212d2"/><polygon points="1702.400,202 1700.600,199.500 1704.200,199.500" fill="#1212d2"/>
<circle cx="1726.500" cy="198.600" r="6.300" stroke="#111" stroke-width="1"/><circle cx="1726.500" cy="198.600" r="1.200" stroke="#c01030" stroke-width="0.900"/><circle cx="1732.800" cy="198.600" r="1.300" stroke="#c01030" stroke-width="0.900" fill="#f5f3f7"/>
<path d="M1745 198.600 H1756" stroke="#111" stroke-width="1.100"/><path d="M1750.500 192.500 V204.700" stroke="#1212d2" stroke-width="1"/><polygon points="1750.500,198 1748.500,195.200 1752.500,195.200" fill="#1212d2"/><polygon points="1750.500,199.200 1748.500,202 1752.500,202" fill="#1212d2"/>
<circle cx="1775.300" cy="199.600" r="5.900" stroke="#111" stroke-width="1"/><path d="M1771.500 205.500 L1780 192" stroke="#1212d2" stroke-width="1"/>
<path d="M1793.300 204.200 L1804.600 193.700" stroke="#111" stroke-width="1.100"/><circle cx="1793.100" cy="204.400" r="1.300" stroke="#c01030" stroke-width="0.900" fill="#f5f3f7"/><circle cx="1804.800" cy="193.500" r="1.300" stroke="#c01030" stroke-width="0.900" fill="#f5f3f7"/>
<path d="M1816.200 203.700 L1826.700 193.800 M1816.200 198.700 H1826" stroke="#333" stroke-width="0.900"/><path d="M1826.300 197 L1830 200.600 M1830 197 L1826.300 200.600" stroke="#c01030" stroke-width="1.300"/>
<circle cx="1847.100" cy="199.100" r="6.200" fill="#c4102a"/><path d="M1844.600 196.600 L1849.600 201.600 M1849.600 196.600 L1844.600 201.600" stroke="#fff" stroke-width="1.900"/>
<path d="M1868.300 195.500 V204.300 H1863.300 Z" stroke="#111" stroke-width="1.100"/><path d="M1870.400 191.500 V206.500" stroke="#666" stroke-width="0.800"/><path d="M1872.500 195.500 V204.300 H1877.500 Z" stroke="#a010b8" stroke-width="1.100"/>
<path d="M1886.500 195 V205.500" stroke="#c4c2c8" stroke-width="1"/>
<polygon points="1909.81,197.38 1909.81,200.82 1907.62,201.18 1907.47,201.53 1908.77,203.33 1906.33,205.77 1904.53,204.47 1904.18,204.62 1903.82,206.81 1900.38,206.81 1900.02,204.62 1899.67,204.47 1897.87,205.77 1895.43,203.33 1896.73,201.53 1896.58,201.18 1894.39,200.82 1894.39,197.38 1896.58,197.02 1896.73,196.67 1895.43,194.87 1897.87,192.43 1899.67,193.73 1900.02,193.58 1900.38,191.39 1903.82,191.39 1904.18,193.58 1904.53,193.73 1906.33,192.43 1908.77,194.87 1907.47,196.67 1907.62,197.02" stroke="#5c6678" stroke-width="1" stroke-linejoin="round"/><circle cx="1902.1" cy="199.1" r="2.900" stroke="#5c6678" stroke-width="1"/>
<path d="M762 453.300 V353.300 A69.500 69.500 0 0 1 859.300 353.300 V453.300 M762 452 A69.500 69.500 0 0 0 859.300 452" stroke="#f070d0" stroke-width="1.500"/>
<path d="M811 334 V399" stroke="#f070d0" stroke-width="1" stroke-dasharray="6 3"/>
<path d="M762 453.300 V531 M859.300 453.300 V531 M762 530 H859.300" stroke="#1c2ccc" stroke-width="1.200"/>
<polygon points="762,530 778,527.600 778,532.400" fill="#1c2ccc"/><polygon points="859.300,530 843.300,527.600 843.300,532.400" fill="#1c2ccc"/>
<path d="M769 295.700 L843.300 488.300" stroke="#1c2ccc" stroke-width="1.200"/>
<polygon points="785.2,337.6 777.6,324.5 782.0,322.7" fill="#1c2ccc"/><polygon points="835.7,468.6 843.3,481.7 838.9,483.5" fill="#1c2ccc"/>
<text x="0" y="0" transform="translate(777.500 294) rotate(68.9)" font-size="19.500" fill="#1c2ccc" font-family="Liberation Sans, sans-serif">50</text>
<text x="804.500" y="522.800" font-size="20" fill="#1c2ccc" font-family="Liberation Sans, sans-serif">35</text>
<path d="M801.500 575.500 V591.500 L805.200 588 L808 594.300 L810.300 593.300 L807.600 587 H812.800 Z" fill="#fff" stroke="#111" stroke-width="1"/>
<path d="M1163 573.500 H1182 M1182.500 573.500 V593.500" stroke="#5a64b4" stroke-width="1.200"/>
<path d="M1182 573 V526" stroke="#34ee20" stroke-width="2.600"/><polygon points="1182,510 1177.500,526.500 1186.500,526.500" fill="#34ee20"/>
<path d="M1184 573.800 H1232" stroke="#c8142c" stroke-width="2.400"/><polygon points="1246,573.800 1230,569.500 1230,578.300" fill="#dc1420"/>
<circle cx="1182.500" cy="573.300" r="4" fill="#1414dc"/>
<path d="M592.500 920 V873" stroke="#34ee20" stroke-width="2.400"/><polygon points="592.500,858 588.200,873.500 596.800,873.500" fill="#34ee20"/>
<path d="M596 921 H643" stroke="#dc1420" stroke-width="2.400"/><polygon points="657,921 641,916.800 641,925.200" fill="#dc1420"/>
<circle cx="592.300" cy="921" r="4" fill="#1414dc"/><path d="M590.500 921 H593" stroke="#fff" stroke-width="0.800"/>
<text x="588.600" y="851.400" font-size="11.500" fill="#5ae64a" font-family="Liberation Sans, sans-serif">Y</text><text x="663.600" y="926.200" font-size="13.500" textLength="6.800" lengthAdjust="spacingAndGlyphs" fill="#d01426" font-family="Liberation Sans, sans-serif">X</text>
</svg><div id="status" class="abs"></div><div id="taskbar" class="abs"></div>
<div class="abs" style="left:0;top:1009px;width:444px;height:1px;background:#dddbe0"></div>
<div class="abs" style="left:934px;top:1012px;width:1px;height:18px;background:#e0dee3"></div>
<div class="abs" style="left:1699px;top:1012px;width:1px;height:18px;background:#e0dee3"></div>
<div class="abs" style="left:1779px;top:1012px;width:1px;height:18px;background:#e0dee3"></div>
<div class="abs" style="left:1849px;top:1012px;width:1px;height:18px;background:#e0dee3"></div>
<div class="t" style="left:5.2px;top:1013.79px;color:#1a1a22;font-size:11px;letter-spacing:-0.178px;">Valmiina (Opaste: paina F1)</div>
<div class="t" style="left:1714.2px;top:1014.19px;color:#1a1a22;font-size:11px;letter-spacing:-0.100px;">dx 13.40</div>
<div class="t" style="left:1784.2px;top:1014.19px;color:#1a1a22;font-size:11px;letter-spacing:-0.109px;">dy -67.71</div>
<div class="t" style="left:1700.5px;top:1049.82px;color:#222;font-size:11.5px;letter-spacing:-0.366px;">FIN</div>
<div class="t" style="left:1849.2px;top:1040.32px;color:#222;font-size:11.5px;letter-spacing:-0.320px;">10.32</div>
<div class="t" style="left:1819.7px;top:1056.52px;color:#222;font-size:11.5px;letter-spacing:-0.062px;">13.12.2024</div>
<svg width="1920" height="1080" style="left:0;top:0" viewBox="0 0 1920 1080" fill="none">
<defs><linearGradient id="wg" x1="0" y1="0" x2="1" y2="1"><stop offset="0" stop-color="#6cc8f0"/><stop offset="1" stop-color="#1580d8"/></linearGradient></defs>
<path d="M795 1045 H806 V1056 H795 Z M807.200 1045 H818.200 V1056 H807.200 Z M795 1057.200 H806 V1068 H795 Z M807.200 1057.200 H818.200 V1068 H807.200 Z" fill="url(#wg)"/>
<rect x="846" y="1045.500" width="15" height="17" rx="1" fill="#1a74c8"/><rect x="853" y="1048" width="9.500" height="6" fill="#3aa0e0"/><rect x="853" y="1054" width="9.500" height="6" fill="#1f86d4"/><path d="M846 1060 L862.800 1053 V1065.500 Q862.800 1066.800 861.500 1066.800 H847 Q846 1066.800 846 1065.500 Z" fill="#2a94dc"/><rect x="839" y="1049.800" width="11.800" height="12.200" rx="1" fill="#0f64b8"/><circle cx="844.900" cy="1055.900" r="3" stroke="#fff" stroke-width="1.500"/>
<circle cx="895.200" cy="1055.800" r="11.500" fill="#fff" stroke="#d6d4d8" stroke-width="0.800"/>
<g stroke-width="2.600" stroke-linecap="round"><path d="M890 1053.500 H894 M893.800 1049.500 V1053" stroke="#36c5f0"/><path d="M897.500 1049.500 V1053.500 M898 1053.500 H901.500" stroke="#2eb67d"/><path d="M896.500 1058 H900.500 M897 1058.500 V1062" stroke="#ecb22e"/><path d="M893 1058 V1062 M889.500 1058 H892.500" stroke="#e01e5a"/></g>
<path d="M927.500 1045.500 Q927.500 1044.200 928.800 1044.200 H947.500 L950.300 1047 V1066 Q950.300 1067.300 949 1067.300 H928.800 Q927.500 1067.300 927.500 1066 Z" fill="#2a3cc0"/><rect x="933.500" y="1044.200" width="10.500" height="7" fill="#e8e8f4"/><rect x="940" y="1045" width="2.500" height="5" fill="#2a3cc0"/><rect x="930" y="1054.500" width="18" height="11.500" fill="#fff"/><path d="M931 1056.500 H947 M931 1059.500 H947 M931 1062.500 H940" stroke="#f090b0" stroke-width="1.300"/><rect x="941" y="1061.500" width="6" height="4.500" fill="#333"/>
<path d="M983.4,1056 L973.01,1050.00 A12 12 0 0 1 993.79,1050.00 Z" fill="#dc3a30"/><path d="M983.4,1056 L993.79,1050.00 A12 12 0 0 1 983.40,1068.00 Z" fill="#f2c53a"/><path d="M983.4,1056 L983.40,1068.00 A12 12 0 0 1 973.01,1050.00 Z" fill="#4ca653"/><circle cx="983.4" cy="1056" r="6.00" fill="#fff"/><circle cx="983.4" cy="1056" r="4.80" fill="#4a78e8"/><circle cx="989.700" cy="1049.500" r="5.200" fill="#5a9cea"/><circle cx="989.700" cy="1048.200" r="1.300" fill="#1a2a5a"/><path d="M987.200 1052 Q989.700 1048.800 992.200 1052 Z" fill="#1a2a5a"/>
<path d="M1026.7,1056 L1016.31,1050.00 A12 12 0 0 1 1037.09,1050.00 Z" fill="#dc3a30"/><path d="M1026.7,1056 L1037.09,1050.00 A12 12 0 0 1 1026.70,1068.00 Z" fill="#f2c53a"/><path d="M1026.7,1056 L1026.70,1068.00 A12 12 0 0 1 1016.31,1050.00 Z" fill="#4ca653"/><circle cx="1026.7" cy="1056" r="6.00" fill="#fff"/><circle cx="1026.7" cy="1056" r="4.80" fill="#4a78e8"/><circle cx="1036" cy="1047" r="7.500" fill="#fff" stroke="#e4e2e6" stroke-width="0.600"/><circle cx="1036" cy="1044.500" r="2.300" fill="#d8a890"/><path d="M1031.800 1052 Q1036 1044.500 1040.200 1052 Z" fill="#e8e8f0"/>
<rect x="1059" y="1044" width="24" height="24" rx="1.500" fill="#e4eaf4"/><rect x="1059" y="1044" width="8" height="15" fill="#1d3a6c"/><rect x="1059" y="1059" width="8" height="9" fill="#8a9ab4"/><rect x="1080" y="1044" width="3" height="24" fill="#2a4a80"/><path d="M1069.500 1047 H1078 M1069.500 1055 H1078 M1072 1059.500 H1078 M1069.500 1065 H1078" stroke="#9aa8c0" stroke-width="1"/><path d="M1061.500 1055.500 H1064.500" stroke="#fff" stroke-width="1"/>
<polygon points="1115.2,1043.5 1125.9,1049.6 1125.9,1062.0 1115.2,1068.1 1104.5,1062.0 1104.5,1049.6" fill="#2b79c2"/><polygon points="1115.2,1043.5 1125.9,1049.6 1125.9,1055.8 1104.5,1055.8 1104.5,1049.6" fill="#3b8ad0"/>
<text x="1115.2" y="1061" font-size="12.500" font-weight="bold" fill="#fff" text-anchor="middle" font-family="Liberation Sans, sans-serif">G4</text><rect x="1109.7" y="1063" width="11" height="3.500" fill="#24456e"/>
<rect x="1023.800" y="1071.800" width="6.200" height="2.800" rx="1.400" fill="#8a8a8e"/><rect x="1112" y="1071.800" width="6.200" height="2.800" rx="1.400" fill="#8a8a8e"/>
<path d="M1634 1058 L1639 1053 L1644 1058" stroke="#222" stroke-width="1.300"/>
<rect x="1662.800" y="1048.300" width="16.200" height="15.400" fill="#e21a2c"/><circle cx="1671.500" cy="1055" r="3.200" stroke="#fff" stroke-width="1.700"/><path d="M1668 1054 V1062" stroke="#fff" stroke-width="1.700"/>
<g stroke="#222" stroke-width="1.100"><rect x="1739.500" y="1048.500" width="11" height="10.500" rx="1"/><path d="M1743 1063.500 H1752 M1745.500 1059 V1063.500 M1750 1061 V1063.500"/><rect x="1751.500" y="1048.500" width="3.200" height="5.500" rx="1" fill="#dcdadd"/><path d="M1753.100 1054 V1063.500"/></g>
<g stroke="#222" stroke-width="1.100"><path d="M1763.500 1053.500 H1766 L1769.500 1050.500 V1061 L1766 1058 H1763.500 Z"/><path d="M1772 1053 Q1773.800 1055.800 1772 1058.600 M1774.500 1051.200 Q1777.300 1055.800 1774.500 1060.400 M1777 1049.600 Q1780.600 1055.800 1777 1062"/></g>
<g stroke="#222" stroke-width="1.100"><path d="M1789 1052.500 H1801 V1058.500 M1789 1052.500 V1059.500 H1795 M1801.500 1054.500 H1803 V1057"/><path d="M1788 1051.500 L1791 1048.500 M1789 1048.500 H1791 V1050.500"/></g><path d="M1799.500 1063.500 L1795.800 1059.800 Q1795 1057.500 1797.300 1057.300 Q1798.800 1057.300 1799.500 1058.800 Q1800.200 1057.300 1801.700 1057.300 Q1804 1057.500 1803.200 1059.800 Z" fill="#222"/>
<path d="M1886.300 1060.800 Q1888.600 1059 1888.600 1054.500 Q1888.600 1049.300 1892.300 1049.300 Q1896 1049.300 1896 1054.500 Q1896 1059 1898.300 1060.800 Z" fill="#222"/><path d="M1890.600 1062 Q1892.300 1064.300 1894 1062 Z" fill="#222"/><circle cx="1892" cy="1055.600" r="2.300" fill="#dcdadd"/><text x="1890.500" y="1057.600" font-size="5" font-weight="bold" fill="#222" font-family="Liberation Sans, sans-serif">z</text><rect x="1894.500" y="1048" width="5" height="5.500" fill="#dcdadd"/><text x="1895" y="1053.200" font-size="6.500" font-weight="bold" fill="#222" font-family="Liberation Sans, sans-serif">Z</text>
</svg>
</body>
</html>
